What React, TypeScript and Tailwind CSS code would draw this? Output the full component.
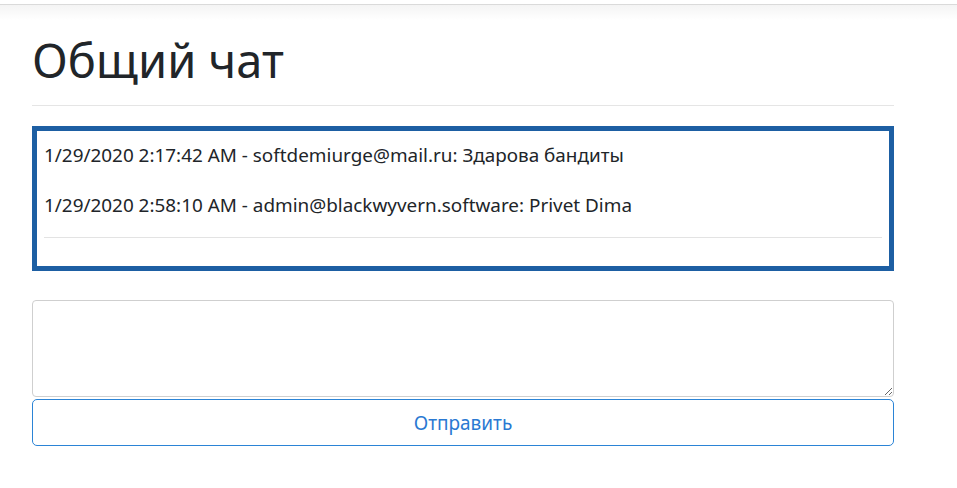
import React from "react";

export default function App() {
  const font = { fontFamily: '"Noto Sans", "Open Sans", sans-serif' };
  return (
    <div className="min-h-[488px] w-full bg-white text-[#212529]" style={font}>
      <div className="h-[4px] bg-white" />
      <div className="h-[16px] border-t border-[#dadada] bg-gradient-to-b from-[#f4f4f4] to-white" />
      <div className="ml-8 w-[862px]">
        <h1 className="mt-[12px] text-[47px] font-normal leading-[56px]">Общий чат</h1>
        <div className="mt-[17px] border-t border-[#e5e5e5]" />
        <div className="mt-[20px] h-[145px] border-[5px] border-[#1d5fa3] px-[7px] pt-[11px]">
          <p className="text-[18.9px] leading-[26px]">1/29/2020 2:17:42 AM - softdemiurge@mail.ru: Здарова бандиты</p>
          <p className="mt-[24px] text-[18.9px] leading-[26px]">1/29/2020 2:58:10 AM - admin@blackwyvern.software: Privet Dima</p>
          <div className="mt-[19px] border-t border-[#e3e3e3]" />
        </div>
        <textarea className="mt-[29px] block h-[97px] w-full rounded-[4px] border border-[#cfcfcf] outline-none" />
        <button className="mt-[2px] flex h-[47px] w-full items-center justify-center rounded-[5px] border border-[#2b84d6] pt-[2px] text-[19px] text-[#2a79d2]">
          Отправить
        </button>
      </div>
    </div>
  );
}
